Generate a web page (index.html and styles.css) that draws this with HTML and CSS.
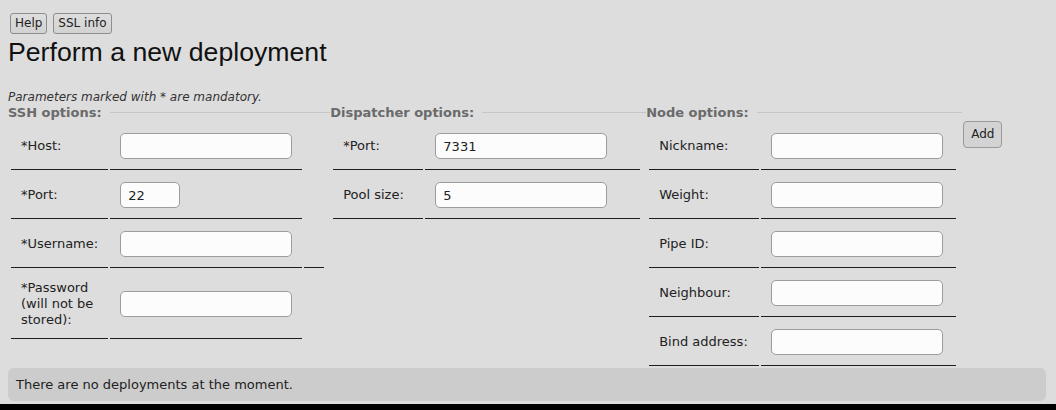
FILE: index.html
```html
<!DOCTYPE html>
<html lang="en">
<head>
<meta charset="utf-8">
<title>Perform a new deployment</title>
<link rel="stylesheet" href="styles.css">
</head>
<body>
<div class="page">
  <div class="toolbar">
    <button class="btn">Help</button>
    <button class="btn">SSL info</button>
  </div>
  <h1 class="title">Perform a new deployment</h1>
  <p class="note">Parameters marked with * are mandatory.</p>
  <div class="forms">
    <section class="group">
      <div class="legend"><span>SSH options:</span></div>
      <table class="opts">
        <tr><td class="lbl">*Host:</td><td class="fld"><input class="inp" type="text"></td></tr>
        <tr><td class="lbl">*Port:</td><td class="fld"><input class="inp inp-short" type="text" value="22"></td></tr>
        <tr><td class="lbl">*Username:</td><td class="fld"><input class="inp" type="text"></td><td class="fld"></td></tr>
        <tr><td class="lbl">*Password (will not be stored):</td><td class="fld"><input class="inp" type="password"></td></tr>
      </table>
    </section>
    <section class="group">
      <div class="legend"><span>Dispatcher options:</span></div>
      <table class="opts">
        <tr><td class="lbl">*Port:</td><td class="fld"><input class="inp" type="text" value="7331"></td></tr>
        <tr><td class="lbl">Pool size:</td><td class="fld"><input class="inp" type="text" value="5"></td></tr>
      </table>
    </section>
    <section class="group">
      <div class="legend"><span>Node options:</span></div>
      <table class="opts">
        <tr><td class="lbl">Nickname:</td><td class="fld"><input class="inp" type="text"></td></tr>
        <tr><td class="lbl">Weight:</td><td class="fld"><input class="inp" type="text"></td></tr>
        <tr><td class="lbl">Pipe ID:</td><td class="fld"><input class="inp" type="text"></td></tr>
        <tr><td class="lbl">Neighbour:</td><td class="fld"><input class="inp" type="text"></td></tr>
        <tr><td class="lbl">Bind address:</td><td class="fld"><input class="inp" type="text"></td></tr>
      </table>
    </section>
    <div class="add-col"><button class="btn btn-add">Add</button></div>
  </div>
  <div class="status">There are no deployments at the moment.</div>
</div>
</body>
</html>
```
FILE: styles.css
```css
html {
  background: #000;
}
body {
  margin: 0;
  font-family: "DejaVu Sans", Verdana, sans-serif;
  color: #222;
}
.page {
  background: #dddddd;
  padding: 13px 10px 3px 8px;
}
.toolbar {
  display: flex;
  gap: 6px;
  padding-left: 2px;
}
.btn {
  font-family: "DejaVu Sans", Verdana, sans-serif;
  font-size: 12px;
  color: #222;
  height: 21px;
  padding: 0 4px;
  margin: 0;
  border: 1px solid #8e8e8e;
  border-radius: 3px;
  background: linear-gradient(#dedede, #d2d2d2);
  line-height: 19px;
}
.title {
  font-family: "Liberation Sans", Arial, sans-serif;
  font-weight: normal;
  font-size: 26.67px;
  line-height: 32px;
  color: #111;
  margin: 2px 0 0 0;
}
.note {
  font-size: 12px;
  font-style: italic;
  line-height: 13px;
  color: #333;
  margin: 23px 0 0 0;
}
.forms {
  display: flex;
  align-items: flex-start;
}
.group {
  flex: none;
}
.legend {
  display: flex;
  align-items: center;
  height: 17px;
}
.legend span {
  font-size: 13px;
  font-weight: bold;
  color: #6a6a6a;
  line-height: 17px;
  padding-right: 8px;
  white-space: nowrap;
}
.legend::after {
  content: "";
  flex: 1;
  height: 1px;
  background: #c6c6c6;
}
.opts {
  width: 311px;
  border-collapse: separate;
  border-spacing: 2px;
  margin: 0 4px 0 1px;
}
.opts td {
  padding: 10px;
  border-bottom: 1px solid #1e1e1e;
  vertical-align: middle;
}
.lbl {
  font-size: 13px;
  line-height: 16px;
  color: #222;
}
.inp {
  display: block;
  box-sizing: border-box;
  width: 172px;
  height: 26px;
  margin: 0;
  padding: 0 7px;
  border: 1px solid #9c9c9c;
  border-radius: 5px;
  background: #fcfcfc;
  font-family: "DejaVu Sans", Verdana, sans-serif;
  font-size: 13px;
  color: #222;
  outline: none;
}
.inp-short {
  width: 60px;
}
.add-col {
  padding-top: 17px;
  margin-left: 1px;
}
.btn-add {
  height: 27px;
  padding: 0 7px;
  border-color: #9a9a9a;
  border-radius: 4px;
  background: #d3d3d3;
  line-height: 25px;
}
.status {
  background: #cccccc;
  border-radius: 6px;
  height: 33px;
  line-height: 33px;
  padding: 0 8px;
  font-size: 13px;
  color: #222;
}
```
